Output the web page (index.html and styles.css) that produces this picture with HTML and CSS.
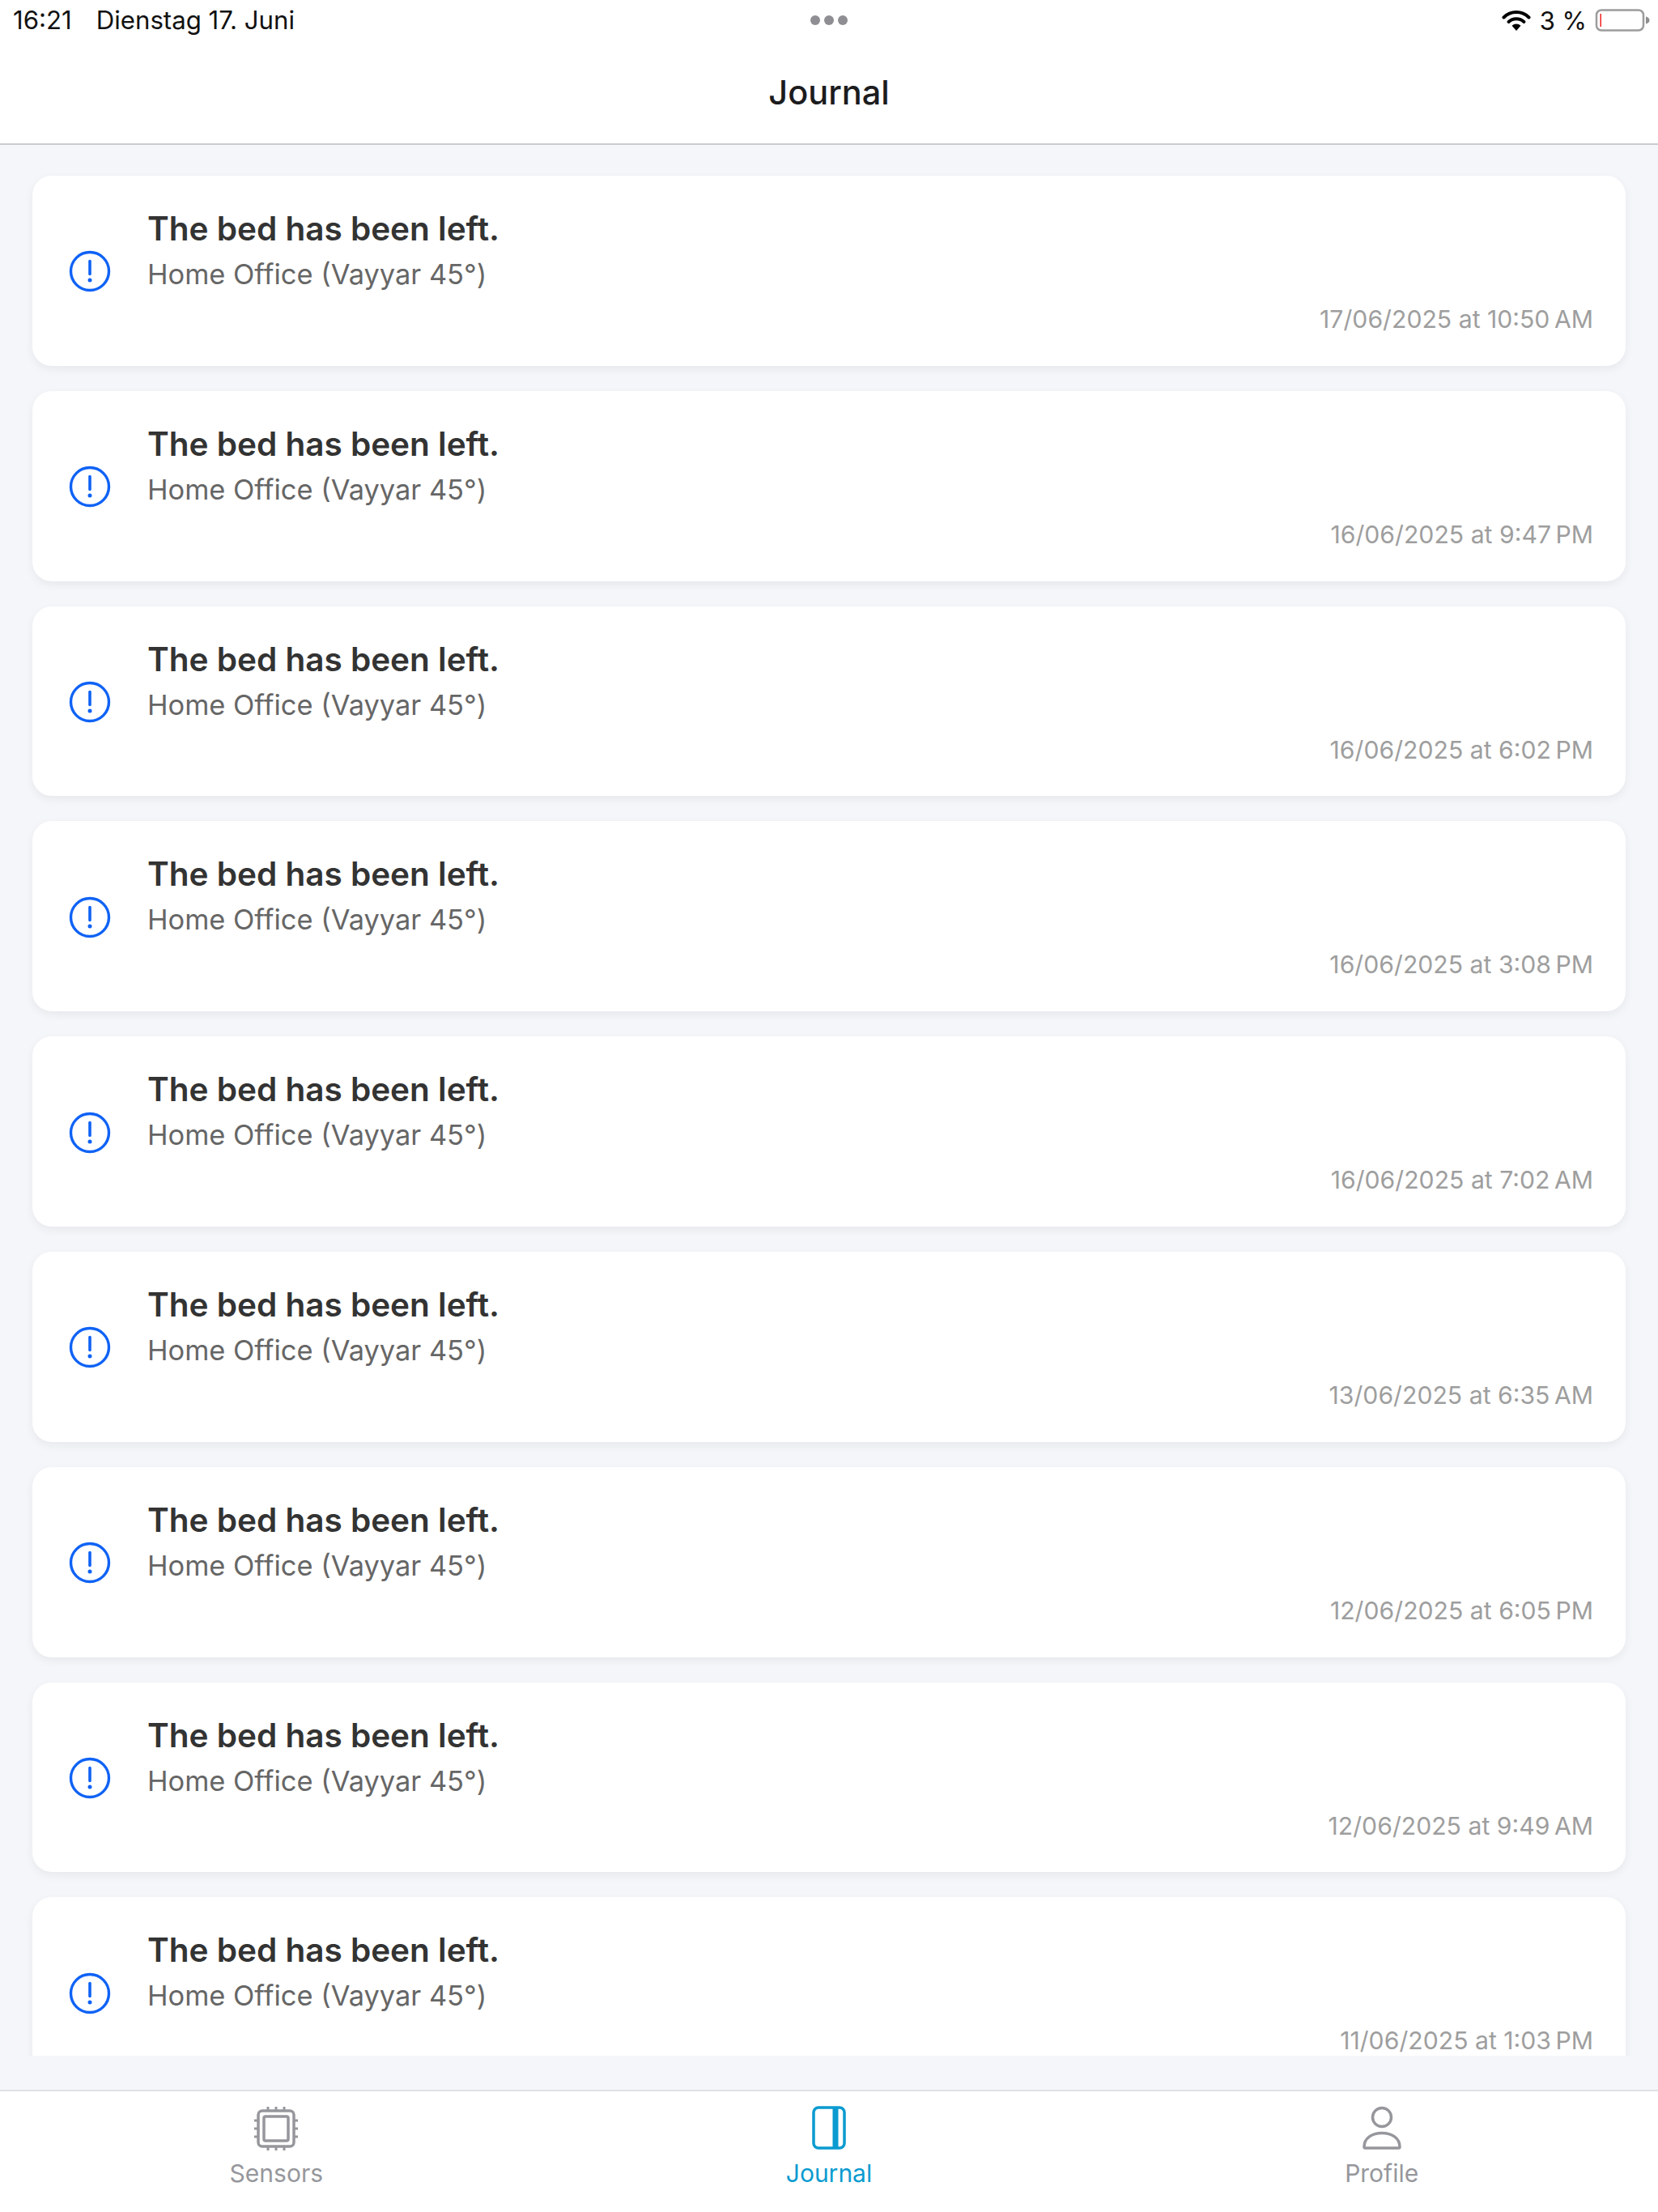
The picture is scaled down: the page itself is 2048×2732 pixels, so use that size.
FILE: index.html
```html
<!DOCTYPE html>
<html lang="en">
<head>
<meta charset="utf-8">
<title>Journal</title>
<link rel="stylesheet" href="styles.css">
</head>
<body>
<div class="app">
  <header class="top">
    <div class="status">
      <div class="status-left"><span>16:21</span><span>Dienstag 17. Juni</span></div>
      <div class="dots"><i></i><i></i><i></i></div>
      <div class="status-right">
        <svg class="wifi" width="36" height="28" viewBox="0 0 36 28"><path d="M2.5 10.5a22 22 0 0 1 31 0" fill="none" stroke="#000" stroke-width="4" stroke-linecap="round"/><path d="M8.5 16a14 14 0 0 1 19 0" fill="none" stroke="#000" stroke-width="4" stroke-linecap="round"/><path d="M18 27l-5.500-6.200a8 8 0 0 1 11 0z" fill="#000"/></svg>
        <span class="pct">3 %</span>
        <svg class="battery" width="68" height="32" viewBox="0 0 68 32"><rect x="2" y="3.5" width="58" height="25" rx="6" fill="none" stroke="#9c9c9c" stroke-width="2.5"/><rect x="6.5" y="8" width="1.500" height="16" fill="#f02020"/><path d="M63 11.500c3 .8 4.500 2.500 4.500 4.500s-1.500 3.700-4.500 4.500z" fill="#8e8e8e"/></svg>
      </div>
    </div>
    <h1 class="title">Journal</h1>
  </header>

  <main class="list">
    <article class="card"><svg class="alert" viewBox="0 0 52 52"><use href="#alert-icon"/></svg><div class="body"><h2>The bed has been left.</h2><p class="place">Home Office (Vayyar 45°)</p><time>17/06/2025 at 10:50&#8239;AM</time></div></article>
    <article class="card"><svg class="alert" viewBox="0 0 52 52"><use href="#alert-icon"/></svg><div class="body"><h2>The bed has been left.</h2><p class="place">Home Office (Vayyar 45°)</p><time>16/06/2025 at 9:47&#8239;PM</time></div></article>
    <article class="card"><svg class="alert" viewBox="0 0 52 52"><use href="#alert-icon"/></svg><div class="body"><h2>The bed has been left.</h2><p class="place">Home Office (Vayyar 45°)</p><time>16/06/2025 at 6:02&#8239;PM</time></div></article>
    <article class="card"><svg class="alert" viewBox="0 0 52 52"><use href="#alert-icon"/></svg><div class="body"><h2>The bed has been left.</h2><p class="place">Home Office (Vayyar 45°)</p><time>16/06/2025 at 3:08&#8239;PM</time></div></article>
    <article class="card"><svg class="alert" viewBox="0 0 52 52"><use href="#alert-icon"/></svg><div class="body"><h2>The bed has been left.</h2><p class="place">Home Office (Vayyar 45°)</p><time>16/06/2025 at 7:02&#8239;AM</time></div></article>
    <article class="card"><svg class="alert" viewBox="0 0 52 52"><use href="#alert-icon"/></svg><div class="body"><h2>The bed has been left.</h2><p class="place">Home Office (Vayyar 45°)</p><time>13/06/2025 at 6:35&#8239;AM</time></div></article>
    <article class="card"><svg class="alert" viewBox="0 0 52 52"><use href="#alert-icon"/></svg><div class="body"><h2>The bed has been left.</h2><p class="place">Home Office (Vayyar 45°)</p><time>12/06/2025 at 6:05&#8239;PM</time></div></article>
    <article class="card"><svg class="alert" viewBox="0 0 52 52"><use href="#alert-icon"/></svg><div class="body"><h2>The bed has been left.</h2><p class="place">Home Office (Vayyar 45°)</p><time>12/06/2025 at 9:49&#8239;AM</time></div></article>
    <article class="card"><svg class="alert" viewBox="0 0 52 52"><use href="#alert-icon"/></svg><div class="body"><h2>The bed has been left.</h2><p class="place">Home Office (Vayyar 45°)</p><time>11/06/2025 at 1:03&#8239;PM</time></div></article>
  </main>

  <nav class="tabs">
    <div class="tab">
      <svg width="56" height="56" viewBox="0 0 56 56" fill="none" stroke="currentColor" stroke-width="3.500"><rect x="6" y="6" width="44" height="44" rx="5"/><rect x="13" y="13" width="30" height="30" rx="2"/><path d="M18 1v5M28 1v5M38 1v5M18 50v5M28 50v5M38 50v5M1 18h5M1 28h5M1 38h5M50 18h5M50 28h5M50 38h5" stroke-width="3"/></svg>
      <span>Sensors</span>
    </div>
    <div class="tab active">
      <svg width="56" height="56" viewBox="0 0 56 56" fill="none" stroke="currentColor" stroke-width="3.500"><rect x="9" y="2" width="38" height="50" rx="6"/><path d="M36 2v50" stroke-width="7"/></svg>
      <span>Journal</span>
    </div>
    <div class="tab">
      <svg width="56" height="56" viewBox="0 0 56 56" fill="none" stroke="currentColor" stroke-width="3.500"><circle cx="28" cy="14" r="11.500"/><path d="M6 50.500c0-11 10-17 22-17s22 6 22 17c0 1-.5 1.500-1.500 1.500h-41c-1 0-1.500-.5-1.500-1.500z" stroke-linejoin="round"/></svg>
      <span>Profile</span>
    </div>
  </nav>
</div>
<svg class="defs" width="0" height="0"><defs><g id="alert-icon"><circle cx="26" cy="26" r="23.500" fill="none" stroke="#0f62f5" stroke-width="3.400"/><path d="M26 13.500v16" stroke="#0f62f5" stroke-width="3.600" stroke-linecap="round"/><circle cx="26" cy="37" r="2.500" fill="#0f62f5"/></g></defs></svg>
</body>
</html>
```
FILE: styles.css
```css
* { box-sizing: border-box; margin: 0; padding: 0; }
html, body { width: 2048px; height: 2732px; overflow: hidden; background: #f5f6fa; }
body { font-family: Inter, "Liberation Sans", sans-serif; }
.defs { position: absolute; }
.app { display: flex; flex-direction: column; height: 2732px; }

.top { height: 179px; background: #fff; border-bottom: 2px solid #c9cbcf; flex: none; }
.status { height: 50px; display: flex; align-items: center; justify-content: space-between; padding: 0 10px 0 16px; position: relative; }
.status-left { display: flex; gap: 30px; font-size: 31.200px; color: #111; }
.dots { position: absolute; left: 1001px; top: 19px; display: flex; gap: 5px; }
.dots i { width: 12px; height: 12px; border-radius: 50%; background: #8e8e93; display: block; }
.status-right { display: flex; align-items: center; gap: 10px; font-size: 31px; color: #111; }
.wifi { margin-right: 1px; }
.title { text-align: center; font-size: 41.500px; font-weight: 500; line-height: 50px; color: #1c1c1e; margin-top: 39px; }

.list { flex: 1; min-height: 0; overflow: hidden; margin-bottom: 42px; padding: 38px 40px 0; display: flex; flex-direction: column; gap: 31px; }
.card { flex: none; height: 234.800px; background: #fff; border-radius: 24px; box-shadow: 0 4px 12px rgba(0,0,0,.06); display: flex; align-items: center; padding: 0 40px 0 45px; }
.alert { width: 52px; height: 52px; flex: none; margin: 2px 45px 0 0; }
.body { flex: 1; display: flex; flex-direction: column; height: 100%; padding-top: 40px; }
h2 { font-size: 40.500px; font-weight: 600; line-height: 52px; color: #333; }
.place { font-size: 34.400px; line-height: 44px; color: #666; margin-top: 8px; }
time { font-size: 30.200px; line-height: 40px; color: #9e9e9e; text-align: right; margin-top: 13px; }

.tabs { flex: none; height: 151px; background: #fff; border-top: 2px solid #e2e2e5; display: grid; grid-template-columns: repeat(3, 1fr); padding: 18px 0 0; }
.tab { display: flex; flex-direction: column; align-items: center; color: #96979c; font-size: 30px; gap: 7px; line-height: 40px; }
.tab.active { color: #0a9bd0; }
```
